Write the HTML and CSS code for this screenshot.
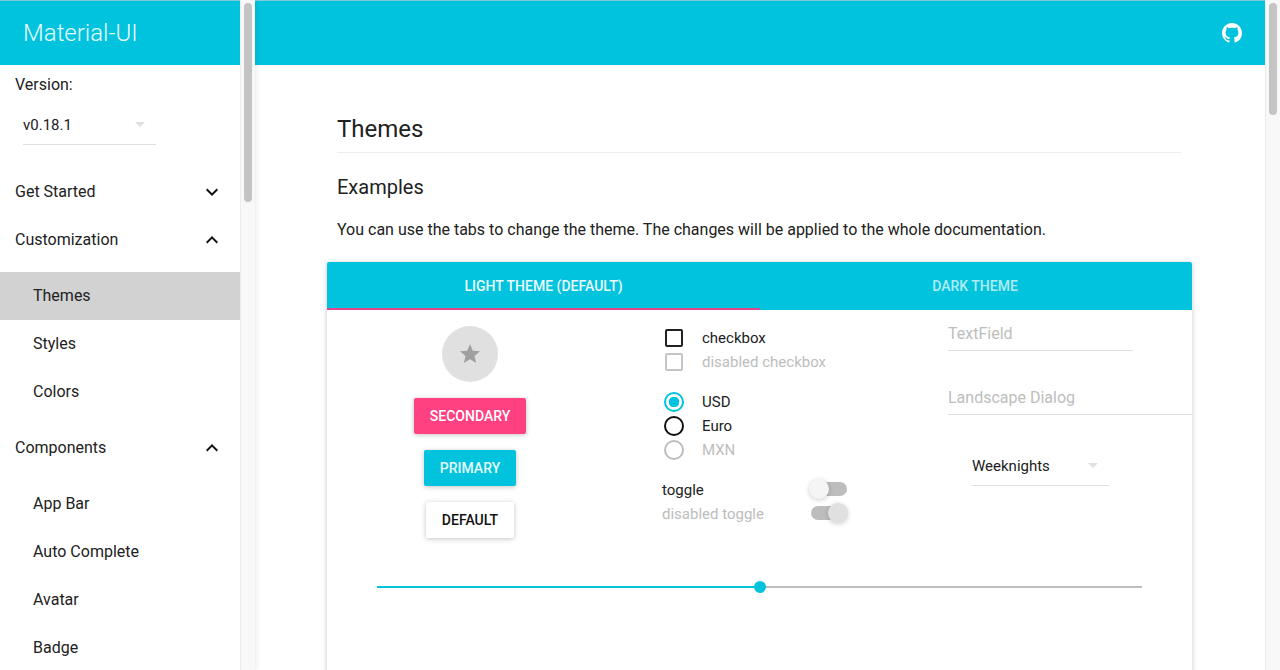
FILE: index.html
```html
<!DOCTYPE html>
<html lang="en">
<head>
  <meta charset="UTF-8" />
  <title>Material-UI</title>
  <link rel="stylesheet" href="styles.css">
</head>
<body>
  <div class="sidebar">
    <nav class="drawer">
      <div class="brand">Material-UI</div>
      <div class="version">Version:</div>
      <div class="select version-select"><span>v0.18.1</span><i class="caret"></i></div>
      <div class="navItem top first">Get Started
        <svg class="chev" viewBox="0 0 24 24"><path d="M7.41 8.59L12 13.17l4.59-4.58L18 10l-6 6-6-6z"/></svg>
      </div>
      <div class="navItem top">Customization
        <svg class="chev" viewBox="0 0 24 24"><path d="M7.41 15.41L12 10.83l4.59 4.58L18 14l-6-6-6 6z"/></svg>
      </div>
      <div class="subList">
        <div class="navItem sub active">Themes</div>
        <div class="navItem sub">Styles</div>
        <div class="navItem sub">Colors</div>
      </div>
      <div class="navItem top">Components
        <svg class="chev" viewBox="0 0 24 24"><path d="M7.41 15.41L12 10.83l4.59 4.58L18 14l-6-6-6 6z"/></svg>
      </div>
      <div class="subList">
        <div class="navItem sub">App Bar</div>
        <div class="navItem sub">Auto Complete</div>
        <div class="navItem sub">Avatar</div>
        <div class="navItem sub">Badge</div>
      </div>
    </nav>
    <div class="scrollTrack"><div class="scrollThumb navThumb"></div></div>
  </div>

  <div class="page">
    <div class="pageBody">
      <header class="appBar">
        <svg class="github" viewBox="0 0 24 24"><path d="M12 2C6.48 2 2 6.48 2 12c0 4.42 2.87 8.17 6.84 9.5.5.09.68-.22.68-.48v-1.7c-2.78.6-3.37-1.34-3.37-1.34-.45-1.16-1.11-1.46-1.11-1.46-.91-.62.07-.6.07-.6 1 .07 1.53 1.03 1.53 1.03.89 1.52 2.34 1.08 2.91.83.09-.65.35-1.08.63-1.33-2.22-.25-4.55-1.11-4.55-4.94 0-1.09.39-1.98 1.03-2.68-.1-.25-.45-1.27.1-2.64 0 0 .84-.27 2.75 1.02A9.56 9.56 0 0 1 12 6.84c.85 0 1.7.11 2.5.34 1.91-1.29 2.75-1.02 2.75-1.02.55 1.37.2 2.39.1 2.64.64.7 1.03 1.59 1.03 2.68 0 3.84-2.34 4.69-4.57 4.94.36.31.68.92.68 1.85v2.75c0 .27.18.58.69.48A10 10 0 0 0 22 12c0-5.52-4.48-10-10-10z"/></svg>
      </header>

      <main class="content">
        <h1 class="pageTitle">Themes</h1>
        <h2 class="sectionTitle">Examples</h2>
        <p class="intro">You can use the tabs to change the theme. The changes will be applied to the whole documentation.</p>

        <section class="paper">
          <div class="tabs">
            <div class="tab selected">LIGHT THEME (DEFAULT)</div>
            <div class="tab dark">DARK THEME</div>
          </div>

          <div class="demo">
            <div class="colButtons">
              <div class="fab">
                <svg viewBox="0 0 24 24"><path d="M12 17.27L18.18 21l-1.64-7.03L22 9.24l-7.19-.61L12 2 9.19 8.63 2 9.24l5.46 4.73L5.82 21z"/></svg>
              </div>
              <button class="btn secondary">SECONDARY</button>
              <button class="btn primary">PRIMARY</button>
              <button class="btn plain">DEFAULT</button>
            </div>

            <div class="colControls">
              <div class="group">
                <div class="line"><i class="check"></i>checkbox</div>
                <div class="line off"><i class="check"></i>disabled checkbox</div>
              </div>
              <div class="group">
                <div class="line"><i class="radio on"></i>USD</div>
                <div class="line"><i class="radio"></i>Euro</div>
                <div class="line off"><i class="radio"></i>MXN</div>
              </div>
              <div class="group toggles">
                <div class="toggleLine">toggle<i class="toggle"></i></div>
                <div class="toggleLine off">disabled toggle<i class="toggle right"></i></div>
              </div>
            </div>

            <div class="colFields">
              <div class="field short">TextField</div>
              <div class="field long">Landscape Dialog</div>
              <div class="select week-select"><span>Weeknights</span><i class="caret"></i></div>
            </div>
          </div>

          <div class="slider"><i class="sliderThumb"></i></div>
        </section>
      </main>
    </div>
    <div class="scrollTrack"><div class="scrollThumb pageThumb"></div></div>
  </div>
</body>
</html>
```

FILE: styles.css
```css
/* Basic reset */
html, body {
  margin: 0;
  height: 670px;
  overflow: hidden;
}
body {
  display: flex;
  background: #fff;
  color: #212121;
  font-family: Roboto, Arial, sans-serif;
  font-size: 16px;
}

/* Sidebar */
.sidebar {
  width: 255px;
  flex: none;
  display: flex;
  height: 670px;
  overflow: hidden;
  box-shadow: 0 1px 6px rgba(0, 0, 0, 0.12);
  position: relative;
  z-index: 2;
}
.drawer {
  width: 240px;
  flex: none;
}
.brand {
  height: 65px;
  background: #02c3dd;
  color: #e6fbff;
  font-size: 24px;
  font-weight: 300;
  line-height: 64px;
  padding-left: 23px;
  box-sizing: border-box;
  border-top: 1px solid #7fc9d6;
}
.version {
  margin: 10px 0 0 15px;
  line-height: 20px;
}
.select {
  display: flex;
  justify-content: space-between;
  align-items: center;
  border-bottom: 1px solid #e0e0e0;
  box-sizing: border-box;
}
.version-select {
  width: 133px;
  height: 40px;
  margin: 10px 0 0 23px;
  padding: 0 11px 0 0;
  font-size: 15px;
}
.caret {
  width: 0;
  height: 0;
  border: 5px solid transparent;
  border-top-color: #e0e0e0;
  border-bottom: 0;
}
.navItem {
  height: 48px;
  line-height: 48px;
  position: relative;
}
.navItem.top {
  padding-left: 15px;
}
.navItem.first {
  margin-top: 23px;
}
.subList {
  padding: 8px 0;
}
.navItem.sub {
  padding-left: 33px;
}
.navItem.active {
  background: #d2d2d2;
}
.chev {
  position: absolute;
  right: 16px;
  top: 12px;
  width: 24px;
  height: 24px;
  fill: #111;
}

/* Scrollbars */
.scrollTrack {
  width: 15px;
  flex: none;
  background: #f8f8f8;
  border-left: 1px solid #ececec;
  box-sizing: border-box;
}
.scrollThumb {
  width: 8px;
  margin: 3px 0 0 3px;
  background: #c4c4c4;
  border-radius: 4px;
}
.navThumb {
  height: 199px;
}
.pageThumb {
  height: 112px;
}

/* Main page */
.page {
  flex: 1;
  display: flex;
  min-width: 0;
  height: 670px;
}
.pageBody {
  flex: 1;
  min-width: 0;
}
.appBar {
  height: 65px;
  background: #02c3dd;
  border-top: 1px solid #7fc9d6;
  box-sizing: border-box;
  display: flex;
  justify-content: flex-end;
  align-items: center;
  padding-right: 21px;
  box-shadow: 0 1px 2px rgba(0, 0, 0, 0.04);
}
.github {
  width: 24px;
  height: 24px;
  fill: #fff;
}
.content {
  padding: 0 73px 0 72px;
}
.pageTitle {
  margin: 0 11px 0 10px;
  padding: 47px 0 8px;
  height: 32px;
  line-height: 34px;
  font-size: 24px;
  font-weight: 400;
  border-bottom: 1px solid #eee;
}
.sectionTitle {
  margin: 20px 0 0 10px;
  font-size: 20px;
  font-weight: 400;
  line-height: 28px;
}
.intro {
  margin: 17px 0 0 10px;
  line-height: 24px;
}

/* Theme paper */
.paper {
  margin-top: 20px;
  height: 420px;
  border-radius: 2px;
  box-shadow: 0 1px 6px rgba(0, 0, 0, 0.12), 0 1px 4px rgba(0, 0, 0, 0.12);
}
.tabs {
  display: grid;
  grid-template-columns: 433px 1fr;
  height: 48px;
  background: #02c3dd;
  border-radius: 2px 2px 0 0;
}
.tab {
  text-align: center;
  line-height: 48px;
  font-size: 14px;
  font-weight: 500;
  color: rgba(255, 255, 255, 0.7);
}
.tab.dark {
  padding-right: 2px;
}
.tab.selected {
  color: #eafcff;
  border-bottom: 2px solid #e0458c;
  height: 46px;
}
.demo {
  display: flex;
  height: 248px;
}

/* Left column */
.colButtons {
  width: 286px;
  flex: none;
  display: flex;
  flex-direction: column;
  align-items: center;
  padding-top: 16px;
}
.fab {
  width: 56px;
  height: 56px;
  border-radius: 50%;
  background: #e0e0e0;
  display: flex;
  align-items: center;
  justify-content: center;
}
.fab svg {
  width: 24px;
  height: 24px;
  fill: #a0a0a0;
}
.btn {
  display: block;
  height: 36px;
  border: 0;
  border-radius: 2px;
  font-family: inherit;
  font-size: 14px;
  font-weight: 500;
  padding: 0 15.5px;
  box-shadow: 0 1px 6px rgba(0, 0, 0, 0.12), 0 1px 4px rgba(0, 0, 0, 0.12);
}
.secondary {
  margin-top: 16px;
  background: #ff4081;
  color: #fff;
}
.primary {
  margin-top: 16px;
  background: #02c3dd;
  color: #e6fbff;
}
.plain {
  margin-top: 16px;
  background: #fff;
  color: #111;
}

/* Middle column */
.colControls {
  width: 335px;
  flex: none;
  padding: 16px 0 0 49px;
  box-sizing: border-box;
  color: #212121;
}
.group {
  margin-bottom: 16px;
}
.line {
  display: flex;
  align-items: center;
  height: 24px;
  font-size: 15px;
}
.line.off, .toggleLine.off {
  color: #bdbdbd;
}
.check {
  width: 18px;
  height: 18px;
  box-sizing: border-box;
  margin: 0 19px 0 3px;
  border: 2px solid #212121;
  border-radius: 2px;
}
.off .check {
  border-color: #c4c4c4;
}
.radio {
  width: 20px;
  height: 20px;
  box-sizing: border-box;
  margin: 0 18px 0 2px;
  border: 2px solid #111;
  border-radius: 50%;
}
.radio.on {
  border-color: #02c3dd;
  background: radial-gradient(circle, #02c3dd 0 5px, transparent 5.5px);
}
.off .radio {
  border-color: #bdbdbd;
}
.toggles {
  margin: 0;
}
.toggleLine {
  display: flex;
  align-items: center;
  justify-content: space-between;
  height: 24px;
  width: 185px;
  font-size: 15px;
}
.toggle {
  width: 36px;
  height: 14px;
  margin-bottom: 2px;
  border-radius: 7px;
  background: #bdbdbd;
  position: relative;
}
.toggle::after {
  content: "";
  position: absolute;
  left: -2px;
  top: -3px;
  width: 20px;
  height: 20px;
  border-radius: 50%;
  background: #f5f5f5;
  box-shadow: 0 1px 5px rgba(0, 0, 0, 0.2);
}
.toggle.right::after {
  left: auto;
  right: -1px;
  background: #e0e0e0;
}

/* Right column */
.colFields {
  flex: 1;
  min-width: 0;
}
.field {
  height: 40px;
  margin-left: 0;
  line-height: 48px;
  color: #bdbdbd;
  border-bottom: 1px solid #e0e0e0;
}
.field.short {
  width: 185px;
}
.field.long {
  margin-top: 23px;
}
.week-select {
  width: 137px;
  height: 40px;
  margin: 31px 0 0 24px;
  padding-right: 11px;
  font-size: 15px;
  color: #212121;
}

/* Slider */
.slider {
  position: relative;
  height: 2px;
  margin: 28px 50px 0;
  background: linear-gradient(to right, #02c3dd 50%, #bdbdbd 50%);
}
.sliderThumb {
  position: absolute;
  left: 50%;
  top: -5px;
  width: 12px;
  height: 12px;
  margin-left: -6px;
  border-radius: 50%;
  background: #02c3dd;
}
```
